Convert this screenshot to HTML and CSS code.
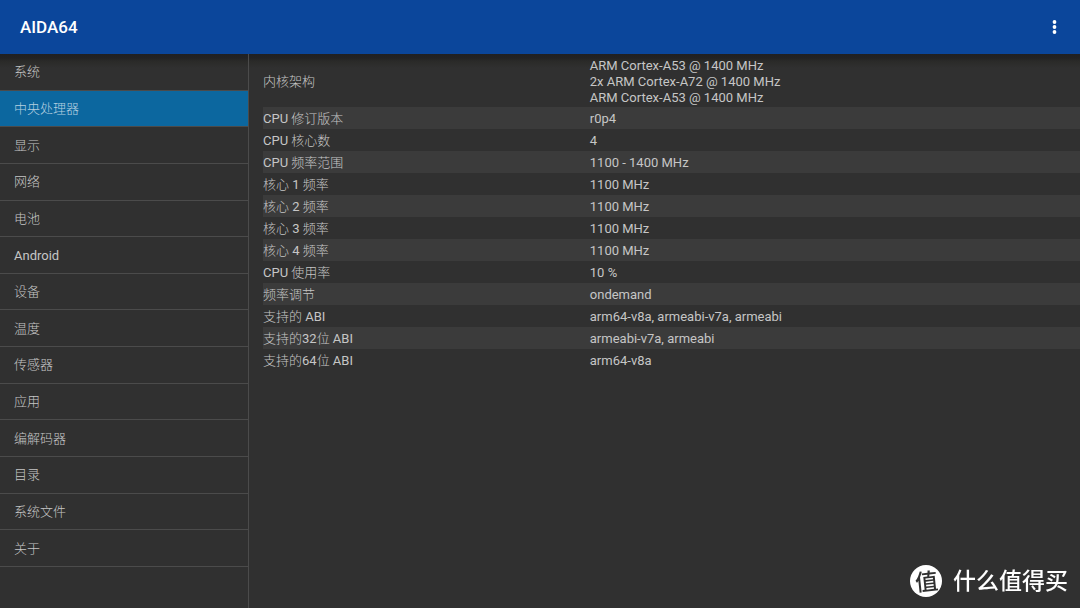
FILE: index.html
```html
<!DOCTYPE html>
<html lang="zh-CN">
<head>
<meta charset="utf-8">
<meta name="viewport" content="width=device-width, initial-scale=1">
<title>AIDA64</title>
<link rel="stylesheet" href="styles.css">
</head>
<body>
<header class="app-bar">
  <h1 class="app-title">AIDA64</h1>
  <button class="menu-button" type="button" aria-label="更多选项">
    <svg class="menu-icon" viewBox="0 0 20 20" aria-hidden="true"><circle cx="10.5" cy="5" r="1.9"/><circle cx="10.5" cy="10" r="1.9"/><circle cx="10.5" cy="15" r="1.9"/></svg>
  </button>
</header>
<div class="content">
  <nav class="sidebar">
    <div class="nav-list">
      <a class="nav-item" href="#system">系统</a>
      <a class="nav-item active" href="#cpu" aria-current="page">中央处理器</a>
      <a class="nav-item" href="#display">显示</a>
      <a class="nav-item" href="#network">网络</a>
      <a class="nav-item" href="#battery">电池</a>
      <a class="nav-item" href="#android"><span class="latin">Android</span></a>
      <a class="nav-item" href="#devices">设备</a>
      <a class="nav-item" href="#thermal">温度</a>
      <a class="nav-item" href="#sensors">传感器</a>
      <a class="nav-item" href="#apps">应用</a>
      <a class="nav-item" href="#codecs">编解码器</a>
      <a class="nav-item" href="#directories">目录</a>
      <a class="nav-item" href="#files">系统文件</a>
      <a class="nav-item" href="#about">关于</a>
    </div>
  </nav>
  <main class="details">
    <table class="info">
      <tbody>
        <tr class="multi"><th scope="row">内核架构</th><td>ARM Cortex-A53 @ 1400 MHz<br>2x ARM Cortex-A72 @ 1400 MHz<br>ARM Cortex-A53 @ 1400 MHz</td></tr>
        <tr><th scope="row"><span class="latin">CPU</span> 修订版本</th><td>r0p4</td></tr>
        <tr><th scope="row"><span class="latin">CPU</span> 核心数</th><td>4</td></tr>
        <tr><th scope="row"><span class="latin">CPU</span> 频率范围</th><td>1100 - 1400 MHz</td></tr>
        <tr><th scope="row">核心 <span class="latin">1</span> 频率</th><td>1100 MHz</td></tr>
        <tr><th scope="row">核心 <span class="latin">2</span> 频率</th><td>1100 MHz</td></tr>
        <tr><th scope="row">核心 <span class="latin">3</span> 频率</th><td>1100 MHz</td></tr>
        <tr><th scope="row">核心 <span class="latin">4</span> 频率</th><td>1100 MHz</td></tr>
        <tr><th scope="row"><span class="latin">CPU</span> 使用率</th><td>10 %</td></tr>
        <tr><th scope="row">频率调节</th><td>ondemand</td></tr>
        <tr><th scope="row">支持的 <span class="latin">ABI</span></th><td>arm64-v8a, armeabi-v7a, armeabi</td></tr>
        <tr><th scope="row">支持的<span class="latin">32</span>位 <span class="latin">ABI</span></th><td>armeabi-v7a, armeabi</td></tr>
        <tr><th scope="row">支持的<span class="latin">64</span>位 <span class="latin">ABI</span></th><td>arm64-v8a</td></tr>
      </tbody>
    </table>
  </main>
</div>
<div class="watermark">
  <span class="watermark-badge"><span class="watermark-mark">值</span></span>
  <span class="watermark-name">什么值得买</span>
</div>
</body>
</html>
```
FILE: styles.css
```css
* {
  box-sizing: border-box;
}

body {
  margin: 0;
  min-height: 100vh;
  display: flex;
  flex-direction: column;
  background: #303030;
  color: #c6c6c6;
  font: 300 13px/16px Roboto, "Noto Sans CJK SC", sans-serif;
}

.latin {
  font-weight: 400;
}

.app-bar {
  display: flex;
  align-items: center;
  justify-content: space-between;
  height: 54px;
  padding: 0 12px 0 20px;
  background: #0b469b;
  color: #fff;
}

.app-title {
  margin: 0;
  font-size: 17px;
  line-height: 24px;
  font-weight: 500;
}

.menu-button {
  display: flex;
  padding: 4px;
  border: 0;
  background: none;
  color: inherit;
}

.menu-icon {
  width: 20px;
  height: 20px;
  fill: currentColor;
}

.content {
  flex: 1;
  display: flex;
  background: linear-gradient(#202022 0, #222224 4px, #2a2a28 7px, #303030 14px);
}

.sidebar {
  flex: 0 0 249px;
  border-right: 1px solid #4b4b4b;
}

.nav-list {
  display: grid;
  grid-auto-rows: 1fr;
  min-height: 513px;
}

.nav-item {
  display: flex;
  align-items: center;
  padding: 1px 14px 0;
  border-bottom: 1px solid #4b4b4b;
  color: inherit;
  text-decoration: none;
}

.nav-item.active {
  background: #0c679f;
  color: #b5d0e0;
}

.details {
  flex: 1;
  padding-left: 14px;
}

.info {
  width: 100%;
  border-collapse: collapse;
  table-layout: fixed;
}

.info th,
.info td {
  padding: 4px 0 2px;
  text-align: left;
}

.info th {
  width: 40%;
  font-weight: 300;
}

.info td {
  font-weight: 400;
}

.info .multi > * {
  padding-bottom: 1px;
}

.info tr:nth-child(even) {
  background: #3b3b3b;
}

.watermark {
  position: fixed;
  right: 12px;
  bottom: 11px;
  display: flex;
  align-items: flex-start;
  gap: 11px;
  color: #fff;
  font: 500 23px/32px "Noto Sans CJK SC", sans-serif;
}

.watermark-name {
  line-height: 28px;
}

.watermark-badge {
  display: flex;
  align-items: center;
  justify-content: center;
  width: 32px;
  height: 32px;
  border-radius: 50%;
  background: #fff;
  color: #303030;
}

.watermark-mark {
  line-height: 28px;
  transform: translateY(-1px) rotate(-6deg);
}
```
